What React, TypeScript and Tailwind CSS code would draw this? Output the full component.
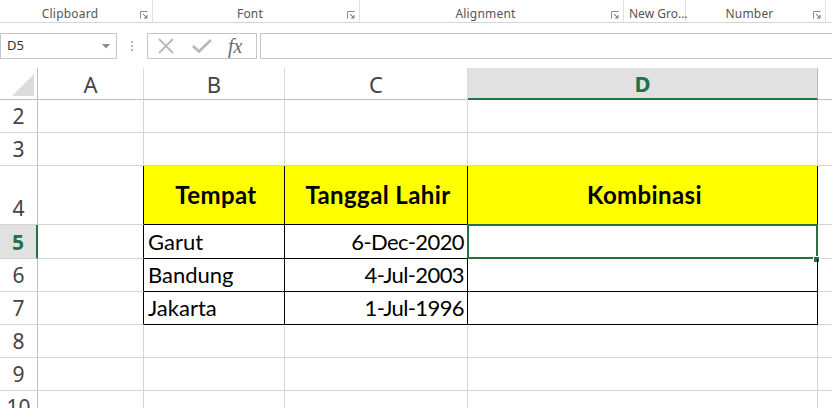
import React from "react";

const cols = [
  { key: "A", w: "w-[106px]" },
  { key: "B", w: "w-[141px]" },
  { key: "C", w: "w-[183px]" },
  { key: "D", w: "w-[350px]" },
];

type Cell = { text?: string; bold?: boolean; align?: "left" | "right"; yellow?: boolean; black?: boolean };

function Launcher() {
  return (
    <svg width="8" height="8" viewBox="0 0 8 8" className="shrink-0 mb-[1px]">
      <path d="M0.5 7.5V0.5H7.5" fill="none" stroke="#8a8a8a" strokeWidth="1" />
      <path d="M3 3L7 7M7 4V7H4" fill="none" stroke="#6a6a6a" strokeWidth="1" />
    </svg>
  );
}

function Group({ label, w }: { label: string; w: string }) {
  return (
    <div className={`${w} h-full flex items-end border-r border-[#e1e1e1] pb-[2px] pr-[4px]`}>
      <span className="flex-1 text-center text-[12px] text-[#555] leading-none tracking-[0.2px] whitespace-nowrap">
        {label}
      </span>
      <Launcher />
    </div>
  );
}

function Row({ num, h, cells, active = false }: { num: number; h: string; cells: Cell[]; active?: boolean }) {
  return (
    <div className={`flex ${h}`}>
      <div
        className={`w-[38px] shrink-0 flex items-end justify-center pb-[5px] border-b border-[#d4d4d4] ${
          active
            ? "bg-[#e1e1e1] border-r-2 border-r-[#217346] text-[#217346] font-bold"
            : "border-r border-r-[#bfbfbf] text-[#444]"
        } text-[21px] leading-none`}
        style={{ fontFamily: "'Noto Sans', sans-serif" }}
      >
        {num}
      </div>
      {cols.map((c, i) => {
        const cell = cells[i] || {};
        const rightBlack = cell.black || (cells[i + 1] && cells[i + 1].black);
        return (
          <div
            key={c.key}
            className={`${c.w} shrink-0 relative flex overflow-hidden whitespace-nowrap border-r border-b ${
              rightBlack ? "border-r-black" : "border-r-[#d4d4d4]"
            } ${cell.black ? "border-b-black" : "border-b-[#d4d4d4]"} ${
              cell.yellow ? "bg-[#ffff00] items-center justify-center" : "items-end pb-[5px]"
            } ${cell.align === "right" ? "justify-end pr-[3px] tracking-[-0.6px]" : "pl-[4px]"} ${
              cell.bold ? "font-bold text-[24px] tracking-[0.4px]" : "text-[22px]"
            } text-black leading-none`}
            style={{ fontFamily: "Lato, 'Noto Sans', sans-serif" }}
          >
            {cell.text}
          </div>
        );
      })}
      <div className="flex-1 border-b border-[#d4d4d4]" />
    </div>
  );
}

export default function App() {
  return (
    <div
      className="w-[832px] h-[408px] overflow-hidden bg-white select-none"
      style={{ fontFamily: "'Noto Sans', sans-serif" }}
    >
      {/* ribbon group labels */}
      <div className="h-[23px] flex border-b border-[#d5d5d5]">
        <Group label="Clipboard" w="w-[153px]" />
        <Group label="Font" w="w-[207px]" />
        <Group label="Alignment" w="w-[264px]" />
        <div className="w-[62px] h-full flex items-end border-r border-[#e1e1e1] pb-[2px] pl-[5px]">
          <span className="text-[12px] text-[#555] leading-none whitespace-nowrap">New Gro...</span>
        </div>
        <Group label="Number" w="w-[140px]" />
      </div>

      {/* formula bar */}
      <div className="h-[45px] flex items-start pt-[10px]">
        <div className="w-[117px] h-[26px] border border-[#c6c6c6] flex items-center pl-[6px] pr-[6px]">
          <span className="flex-1 text-[13px] text-[#333]">D5</span>
          <svg width="8" height="5" viewBox="0 0 8 5">
            <path d="M0 0H8L4 4.5Z" fill="#8a8a8a" />
          </svg>
        </div>
        <div className="w-[30px] h-[26px] flex flex-col items-center justify-center gap-[2px]">
          <span className="w-[2px] h-[2px] bg-[#b5b5b5]" />
          <span className="w-[2px] h-[2px] bg-[#b5b5b5]" />
          <span className="w-[2px] h-[2px] bg-[#b5b5b5]" />
        </div>
        <div className="w-[110px] h-[26px] border border-[#c6c6c6] flex items-center">
          <svg width="18" height="16" viewBox="0 0 18 16" className="ml-[9px]">
            <path d="M2 1L16 15M16 1L2 15" stroke="#b8b8b8" strokeWidth="1.8" />
          </svg>
          <svg width="20" height="14" viewBox="0 0 20 14" className="ml-[17px]">
            <path d="M1 7L7 12.5L19 1" fill="none" stroke="#b8b8b8" strokeWidth="2.6" />
          </svg>
          <span
            className="ml-[16px] text-[20px] italic text-[#6a6a6a] leading-none"
            style={{ fontFamily: "'Liberation Serif', serif" }}
          >
            fx
          </span>
        </div>
        <div className="ml-[3px] flex-1 h-[26px] border-y border-l border-[#c6c6c6]" />
      </div>

      {/* column headers */}
      <div className="flex h-[32px]">
        <div className="w-[38px] shrink-0 border-r border-b border-[#bfbfbf] flex items-end justify-end pb-[3px] pr-[3px]">
          <svg width="22" height="22" viewBox="0 0 22 22">
            <path d="M22 0V22H0Z" fill="#dcdcdc" />
          </svg>
        </div>
        {cols.map((c) =>
          c.key === "D" ? (
            <div
              key={c.key}
              className={`${c.w} shrink-0 bg-[#e1e1e1] border-r border-r-[#bfbfbf] border-b-2 border-b-[#217346] flex items-center justify-center text-[22px] font-bold text-[#217346] leading-none`}
            >
              {c.key}
            </div>
          ) : (
            <div
              key={c.key}
              className={`${c.w} shrink-0 border-r border-b border-[#bfbfbf] border-r-[#dadada] flex items-center justify-center text-[22px] text-[#444] leading-none`}
            >
              {c.key}
            </div>
          )
        )}
        <div className="flex-1 border-b border-[#bfbfbf]" />
      </div>

      <Row num={2} h="h-[33px]" cells={[]} />
      <Row num={3} h="h-[33px]" cells={[]} />
      <Row
        num={4}
        h="h-[59px]"
        cells={[
          {},
          { text: "Tempat", bold: true, yellow: true, black: true },
          { text: "Tanggal Lahir", bold: true, yellow: true, black: true },
          { text: "Kombinasi", bold: true, yellow: true, black: true },
        ]}
      />
      <div className="relative">
        <Row
          num={5}
          h="h-[34px]"
          active
          cells={[
            {},
            { text: "Garut", black: true },
            { text: "6-Dec-2020", align: "right", black: true },
            { black: true },
          ]}
        />
        {/* active cell outline + fill handle */}
        <div className="absolute left-[467px] top-[-1px] w-[351px] h-[35px] border-2 border-[#217346]" />
        <div className="absolute left-[813px] top-[31px] w-[7px] h-[7px] bg-[#217346] border border-white" />
      </div>
      <Row
        num={6}
        h="h-[33px]"
        cells={[{}, { text: "Bandung", black: true }, { text: "4-Jul-2003", align: "right", black: true }, { black: true }]}
      />
      <Row
        num={7}
        h="h-[33px]"
        cells={[{}, { text: "Jakarta", black: true }, { text: "1-Jul-1996", align: "right", black: true }, { black: true }]}
      />
      <Row num={8} h="h-[33px]" cells={[]} />
      <Row num={9} h="h-[33px]" cells={[]} />
      <Row num={10} h="h-[33px]" cells={[]} />
    </div>
  );
}
